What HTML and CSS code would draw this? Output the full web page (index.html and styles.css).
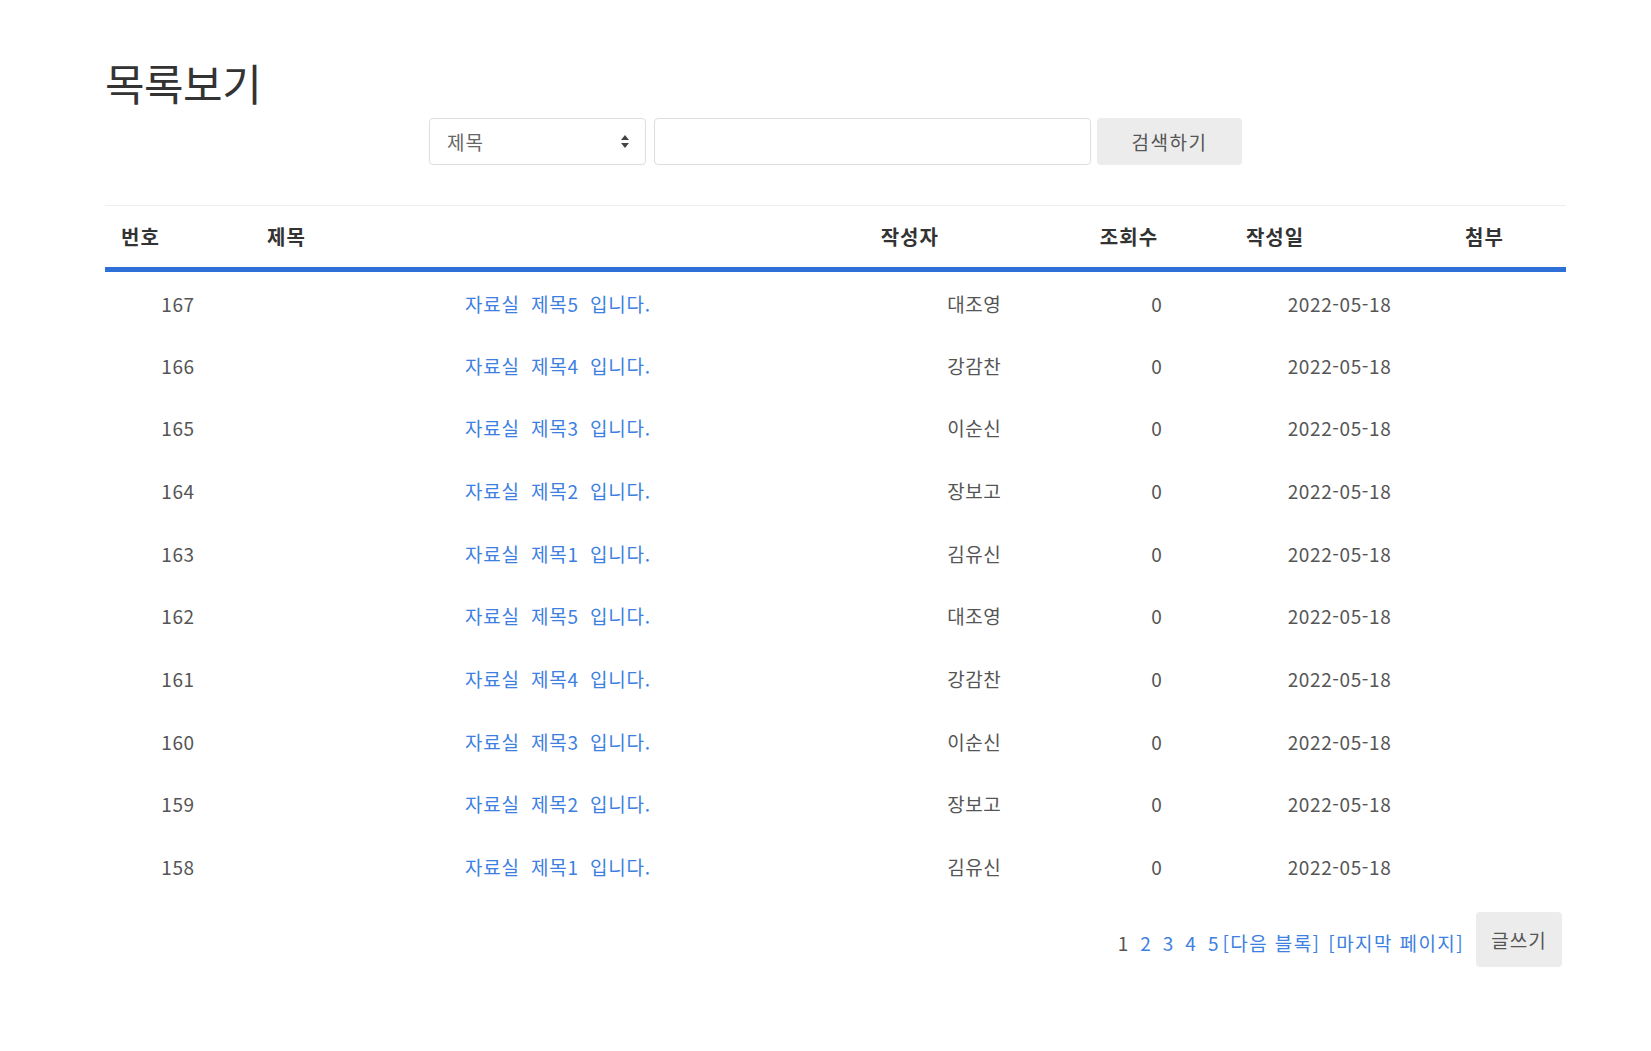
FILE: index.html
```html
<!DOCTYPE html>
<html lang="ko">
<head>
<meta charset="utf-8">
<title>목록보기</title>
<link rel="stylesheet" href="styles.css">
</head>
<body>
<div class="page">
  <h2 class="title">목록보기</h2>
  <form class="search">
    <div class="select">
      <span>제목</span>
      <svg class="arrows" width="8" height="13" viewBox="0 0 8 13"><path d="M4 0 L8 5 L0 5 Z M0 8 L8 8 L4 13 Z" fill="#444"/></svg>
    </div>
    <div class="input"></div>
    <div class="btn">검색하기</div>
  </form>
  <table class="board">
    <colgroup>
      <col class="c-num"><col class="c-title"><col class="c-author"><col class="c-views"><col class="c-date"><col class="c-file">
    </colgroup>
    <thead>
      <tr><th>번호</th><th>제목</th><th>작성자</th><th>조회수</th><th>작성일</th><th>첨부</th></tr>
    </thead>
    <tbody>
      <tr><td>167</td><td><a class="link">자료실 제목5 입니다.</a></td><td>대조영</td><td>0</td><td>2022-05-18</td><td></td></tr>
      <tr><td>166</td><td><a class="link">자료실 제목4 입니다.</a></td><td>강감찬</td><td>0</td><td>2022-05-18</td><td></td></tr>
      <tr><td>165</td><td><a class="link">자료실 제목3 입니다.</a></td><td>이순신</td><td>0</td><td>2022-05-18</td><td></td></tr>
      <tr><td>164</td><td><a class="link">자료실 제목2 입니다.</a></td><td>장보고</td><td>0</td><td>2022-05-18</td><td></td></tr>
      <tr><td>163</td><td><a class="link">자료실 제목1 입니다.</a></td><td>김유신</td><td>0</td><td>2022-05-18</td><td></td></tr>
      <tr><td>162</td><td><a class="link">자료실 제목5 입니다.</a></td><td>대조영</td><td>0</td><td>2022-05-18</td><td></td></tr>
      <tr><td>161</td><td><a class="link">자료실 제목4 입니다.</a></td><td>강감찬</td><td>0</td><td>2022-05-18</td><td></td></tr>
      <tr><td>160</td><td><a class="link">자료실 제목3 입니다.</a></td><td>이순신</td><td>0</td><td>2022-05-18</td><td></td></tr>
      <tr><td>159</td><td><a class="link">자료실 제목2 입니다.</a></td><td>장보고</td><td>0</td><td>2022-05-18</td><td></td></tr>
      <tr><td>158</td><td><a class="link">자료실 제목1 입니다.</a></td><td>김유신</td><td>0</td><td>2022-05-18</td><td></td></tr>
    </tbody>
  </table>
  <div class="footer">
    <div class="paging">
      <span class="pnum cur">1</span>
      <a class="pnum plink">2</a>
      <a class="pnum plink">3</a>
      <a class="pnum plink">4</a>
      <a class="pnum plink last">5</a>
      <a class="pblock plink">[다음 블록]</a>
      <a class="pblock plink">[마지막 페이지]</a>
    </div>
    <div class="btn write">글쓰기</div>
  </div>
</div>
</body>
</html>
```

FILE: styles.css
```css
* { box-sizing: border-box; }
html, body { margin: 0; padding: 0; background: #fff; }
body {
  font-family: "Noto Sans CJK KR", "Noto Sans", sans-serif;
  font-size: 19px;
  color: #555;
}
.page {
  width: 1461px;
  margin-left: 105px;
  padding-top: 58px;
}
.title {
  margin: 0;
  font-size: 43px;
  font-weight: 400;
  line-height: 48px;
  letter-spacing: -0.5px;
  color: #333;
}
.search {
  margin-top: 12px;
  display: flex;
  justify-content: center;
  gap: 8px;
  height: 47px;
}
.select {
  width: 217px;
  height: 47px;
  border: 1px solid #dedede;
  border-radius: 4px;
  display: flex;
  align-items: center;
  justify-content: space-between;
  padding: 0 16px 0 17px;
  color: #666;
  letter-spacing: 1px;
}
.input {
  width: 437px;
  height: 47px;
  border: 1px solid #dedede;
  border-radius: 4px;
}
.btn {
  background: #ececec;
  border-radius: 4px;
  color: #555;
  display: flex;
  align-items: center;
  justify-content: center;
  letter-spacing: 1.5px;
}
.search .btn { width: 145px; margin-left: -2px; }
.board {
  margin-top: 40px;
  width: 100%;
  border-collapse: collapse;
  table-layout: fixed;
}
.c-num { width: 10%; }
.c-title { width: 42%; }
.c-author { width: 15%; }
.c-views { width: 10%; }
.c-date { width: 15%; }
.c-file { width: 8%; }
.board th {
  text-align: left;
  font-size: 20px;
  font-weight: 700;
  letter-spacing: 1px;
  color: #333;
  height: 64px;
  padding: 0 14px 0 16px;
  border-top: 1px solid #efefef;
  border-bottom: 5px solid #2f6fd8;
  vertical-align: middle;
}
.board td {
  height: 62.7px;
  padding: 3px 14px 0;
  text-align: center;
  vertical-align: middle;
  letter-spacing: 0.6px;
}
.link {
  color: #3d80df;
  word-spacing: 5px;
  letter-spacing: 0.8px;
}
.footer {
  margin-top: 16px;
  display: flex;
  justify-content: flex-end;
  align-items: center;
  padding-right: 4px;
}
.paging {
  display: flex;
  align-items: center;
  margin-right: 12px;
  padding-top: 5px;
}
.pnum { margin-right: 12px; }
.pnum.last { margin-right: 4px; }
.pblock { letter-spacing: 1.4px; margin-right: 8px; }
.pblock:last-child { margin-right: 0; }
.cur { color: #555; }
.plink { color: #3d80df; }
.write {
  width: 86px;
  height: 55px;
  letter-spacing: 1px;
}
```
